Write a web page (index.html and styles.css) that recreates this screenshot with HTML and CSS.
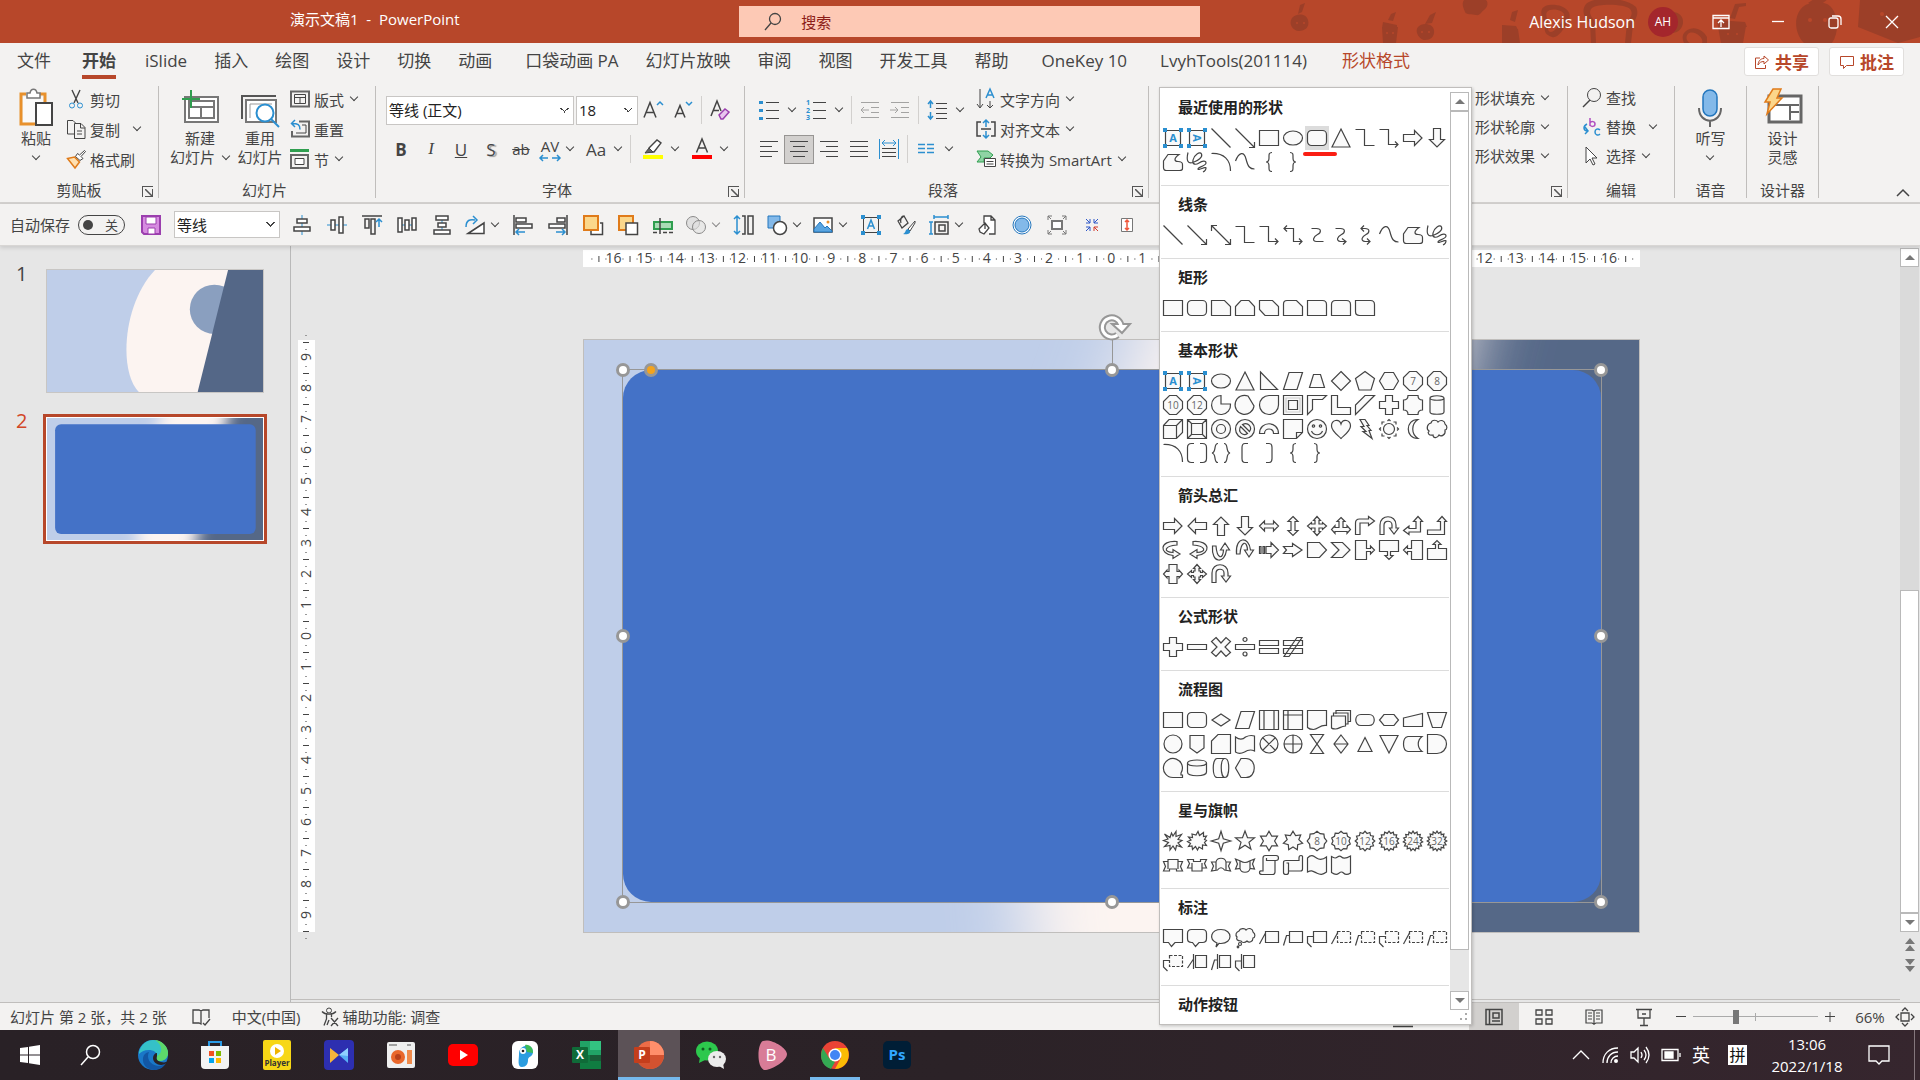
FILE: index.html
```html
<!DOCTYPE html>
<html lang="zh-CN">
<head>
    <meta charset="UTF-8">
    <meta name="viewport" content="width=device-width, initial-scale=1.0">
    <title>演示文稿1 - PowerPoint</title>
    <link rel="stylesheet" href="styles.css">
</head>
<body>
    <div class="app">
        <header class="titlebar">
            <svg class="doodles" viewBox="0 0 640 43" width="640" height="43" aria-hidden="true">
                <g fill="#9c3f28">
                    <path d="M12 18c4-5 14-5 16 2s-3 11-9 11-11-7-7-13zM18 14l2-9 5-2-3 9z"/>
                    <path d="M102 27h16l-2 16h-13zM103 22l14 3v3h-15zM108 20l3-6 5-2-3 9z"/>
                    <path d="M138 27c4-5 15-4 16 3s-4 10-9 10-11-8-7-13zM145 24l5-9 6-3-4 11z"/>
                    <path d="M184 0h22c3 3 1 8-2 10s-4 6-8 5-10 0-11-3-4-8-1-12z"/>
                    <path d="M222 31l16-2 2 14h-18zM222 25l14 1 2 4-16 1zM230 20l2-8 6-2-3 12z"/>
                    <path d="M262 9c3-6 20-6 26 2 4 5 0 11-2 14s-8 14-14 12-8-5-7-10-6-12-3-18zM267 12c3-4 14-3 17 2 2 5-9 18-13 18s-3-6-3-9-3-8-1-11z" fill-rule="evenodd"/>
                    <path d="M306 4c8-8 40-7 50 3 4 8-2 13-3 18l-2 18h-40l-1-20c-6-4-9-13-4-19zM312 8c-5 5 1 10 3 14l1 21h29l2-20c3-5 7-9 3-14s-32-6-38-1z" fill-rule="evenodd"/>
                    <path d="M386 14c8-5 18 0 17 9s-12 14-19 6z"/>
                    <path d="M406 31c8-6 17-1 21 6v6h-23c-2-5-2-9 2-12zM408 34c-3 3-1 8 2 9h12c3-5-9-14-14-9z" fill-rule="evenodd"/>
                    <path d="M438 27l28-1-3 17h-22zM437 20l28 2 2 5h-29zM450 18l5-14 11-1v3l-7 1-4 12z"/>
                    <path d="M524 6c5-4 20-6 26 0 8 8 10 25 2 37h-28c-11-11-10-30 0-37zM528 3l6-4h14l-9 7z"/>
                    <path d="M580 0h60v37l-22 6-40-16zM590 4l40 6-14 24-26-8z"/>
                </g>
                <g fill="#b7472a">
                    <circle cx="17" cy="23" r="1"/><circle cx="24" cy="23" r="1"/>
                    <circle cx="107" cy="33" r="1"/><circle cx="113" cy="33" r="1"/>
                    <circle cx="142" cy="32" r="1"/><circle cx="149" cy="32" r="1"/>
                    <circle cx="448" cy="34" r="1"/><circle cx="457" cy="34" r="1"/>
                    <circle cx="530" cy="20" r="2"/><circle cx="545" cy="20" r="2"/>
                    <circle cx="602" cy="14" r="2"/><circle cx="616" cy="18" r="2"/>
                </g>
            </svg>
            <div class="doc-title">演示文稿1&nbsp; -&nbsp; PowerPoint</div>
            <label class="search-box">
                <svg width="20" height="20" viewBox="0 0 20 20" fill="none" stroke="#8c1d18" stroke-width="1.3"><circle cx="12" cy="7" r="5.5"/><path d="M8 11 2 18"/></svg>
                <input type="text" placeholder="搜索" aria-label="搜索">
            </label>
            <div class="title-right">
                <span class="user-name">Alexis Hudson</span>
                <span class="avatar">AH</span>
                <button class="win-btn" aria-label="功能区显示选项"><svg viewBox="0 0 18 16" width="18" height="16"><path d="M1 1.500h16v13H1zM1 4h16M9 13V6.500M6 9l3-3 3 3" /></svg></button>
                <button class="win-btn" aria-label="最小化"><svg viewBox="0 0 14 14" width="14" height="14"><path d="M1 6.500h12"/></svg></button>
                <button class="win-btn" aria-label="还原"><svg viewBox="0 0 14 14" width="14" height="14"><rect x="1" y="3" width="9" height="10" rx="2"/><path d="M4 1h6a3 3 0 0 1 3 3v6"/></svg></button>
                <button class="win-btn" aria-label="关闭"><svg viewBox="0 0 14 14" width="14" height="14"><path d="M1 1l12 12M13 1 1 13"/></svg></button>
            </div>
        </header>

        <nav class="tabs">
            <a href="#" class="tab">文件</a>
            <a href="#" class="tab active">开始</a>
            <a href="#" class="tab">iSlide</a>
            <a href="#" class="tab">插入</a>
            <a href="#" class="tab">绘图</a>
            <a href="#" class="tab">设计</a>
            <a href="#" class="tab">切换</a>
            <a href="#" class="tab">动画</a>
            <a href="#" class="tab addin">口袋动画 PA</a>
            <a href="#" class="tab">幻灯片放映</a>
            <a href="#" class="tab">审阅</a>
            <a href="#" class="tab">视图</a>
            <a href="#" class="tab">开发工具</a>
            <a href="#" class="tab">帮助</a>
            <a href="#" class="tab addin">OneKey 10</a>
            <a href="#" class="tab addin">LvyhTools(201114)</a>
            <a href="#" class="tab addin context">形状格式</a>
            <span class="spacer"></span>
            <button class="share-btn"><svg width="16" height="16" viewBox="0 0 16 16"><path d="M6 4H1.500v10.500h10V11M10 2l4.500 4L10 10V7.500c-3 0-4.500 1-6 3.500.300-4 2.500-6.500 6-6.500z"/></svg>共享</button>
            <button class="share-btn"><svg width="16" height="16" viewBox="0 0 16 16"><path d="M1.500 2.500h13v9h-7l-3 3v-3h-3z"/></svg>批注</button>
        </nav>

        <div class="ribbon">
            <section class="group g-clip">
                <div class="group-body">
                    <button class="big-btn">
                        <svg width="36" height="40" viewBox="0 0 36 40"><path d="M8 6H3v30h14M22 6h5v8" stroke="#e8912d" stroke-width="3"/><path d="M5 9h20v6h-7v19H5z" fill="#fafafa" stroke="none"/><path d="M9 10V5h3c1-5 6-5 7 0h3v5z" fill="#fff" stroke="#777" stroke-width="1.500"/><rect x="18" y="15" width="16" height="22" fill="#fff" stroke-width="2"/></svg>
                        <span>粘贴</span><i class="chev"></i>
                    </button>
                    <div class="btn-col">
                        <button class="row-btn"><svg class="ico" viewBox="0 0 20 20"><path d="M6 1l6 13M14 1 8 14" stroke-width="1.400"/><g class="blue"><circle cx="6" cy="16.500" r="2.500"/><circle cx="14" cy="16.500" r="2.500"/></g></svg>剪切</button>
                        <button class="row-btn"><svg class="ico" viewBox="0 0 20 20"><path d="M8 15H1.500V1.500H7l3 3M8.500 4.500H15l4 4v11H8.500zM14.500 5v4H19M11 12h5M11 15h5"/></svg>复制<i class="chev far"></i></button>
                        <button class="row-btn"><svg class="ico" viewBox="0 0 20 20"><path d="M18.500 1.500l-5 4.500-2-1.500-2 3 4.500 4 3-2-2-2 4.500-5z" fill="#fff"/><path d="M8.500 8l5 5L9 19 1.500 9.500z" fill="#ffe0b0" stroke="#e07b1a" stroke-width="1.500"/></svg>格式刷</button>
                    </div>
                </div>
                <div class="group-label">剪贴板</div><button class="launcher" aria-label="剪贴板设置"></button>
            </section>

            <section class="group g-slides">
                <div class="group-body">
                    <button class="big-btn">
                        <svg width="40" height="40" viewBox="0 0 40 40"><rect x="5" y="9" width="33" height="25" fill="#fff" stroke="#777" stroke-width="2"/><path d="M9 13h25v17H9zM9 19h25M21 19v11" stroke="#777" stroke-width="2"/><path d="M2 11h18M11 2v18" stroke="#2f9e4f" stroke-width="2"/></svg>
                        <span>新建</span><span>幻灯片 <i class="chev"></i></span>
                    </button>
                    <button class="big-btn">
                        <svg width="40" height="40" viewBox="0 0 40 40"><path d="M2 31V8h34" stroke-width="2" stroke="#555"/><path d="M6 34V12h30v22z" fill="#fff" stroke="#777" stroke-width="2"/><path d="M10 30V16h22" stroke="#999"/><circle cx="25" cy="25" r="8.500" fill="#fff" stroke="#2b8fd0" stroke-width="2"/><path d="M31 31l8 8" stroke="#2b8fd0" stroke-width="2"/></svg>
                        <span>重用</span><span>幻灯片</span>
                    </button>
                    <div class="btn-col">
                        <button class="row-btn"><svg class="ico" viewBox="0 0 20 20"><path d="M1 2.500h18v15H1z" stroke-width="2" stroke="#666"/><path d="M4.500 5.500h11v9h-11zM4.500 8.500h11M10 8.500v6"/></svg>版式<i class="chev"></i></button>
                        <button class="row-btn"><svg class="ico" viewBox="0 0 20 20"><path d="M9 2.500h10v15H2V12" stroke-width="2" stroke="#666"/><path d="M12 6h4v8H6"/><path class="blue" d="M5 1 1.500 4.500 5 8M2 4.500c6 0 8 1 8 6" stroke-width="1.500"/></svg>重置</button>
                        <button class="row-btn"><svg class="ico" viewBox="0 0 20 20"><path d="M0 1.500h19" stroke="#2f9e4f" stroke-width="3"/><path d="M1 6h17v13H1z" stroke-width="2" stroke="#666"/><path d="M5 9.500h9v6H5z" fill="#fff"/></svg>节<i class="chev"></i></button>
                    </div>
                </div>
                <div class="group-label">幻灯片</div>
            </section>

            <section class="group g-font">
                <div class="group-body rows">
                    <div class="tool-row">
                        <select class="combo font-name" aria-label="字体"><option>等线 (正文)</option></select>
                        <select class="combo font-size" aria-label="字号"><option>18</option></select>
                        <button class="tool" aria-label="增大字号"><svg class="ico" viewBox="0 0 20 20"><path d="M1 17.500 7 2.500l6 15M3 12.500h8" stroke-width="1.500"/><path class="blue" d="M14 5l3-3 3 3" stroke-width="1.500"/></svg></button>
                        <button class="tool" aria-label="减小字号"><svg class="ico" viewBox="0 0 20 20"><path d="M2 17.500 7 5.500l5 12M4 13.500h6" stroke-width="1.500"/><path class="blue" d="M13 2l3 3 3-3" stroke-width="1.500"/></svg></button>
                        <i class="sep"></i>
                        <button class="tool" aria-label="清除格式"><svg class="ico" viewBox="0 0 20 20"><path d="M1 16 7 1l4 10M3.500 10.500H9" stroke-width="1.500"/><path d="M9 15l6-6 4 3-6 7h-2z" fill="#e8c6ee" stroke="#9b3fae" stroke-width="1.500"/></svg></button>
                    </div>
                    <div class="tool-row styles">
                        <button class="tool glyph bold">B</button>
                        <button class="tool glyph italic">I</button>
                        <button class="tool glyph under">U</button>
                        <button class="tool glyph shadow">S</button>
                        <button class="tool glyph strike">ab</button>
                        <button class="tool glyph spacing">AV<svg width="22" height="6" viewBox="0 0 22 6"><path class="blue" d="M1 3h8M13 3h8M4 0 1 3l3 3M18 0l3 3-3 3" stroke-width="1.500"/></svg></button><i class="chev"></i>
                        <button class="tool glyph case">Aa</button><i class="chev"></i>
                        <i class="sep"></i>
                        <button class="tool" aria-label="突出显示"><svg class="ico" viewBox="0 0 20 20"><path d="M6 9l8-8 4 3-7 9H6z" fill="#fff" stroke-width="1.400"/><path d="M2 14l4-5 4 4z" fill="#666"/><path d="M0 18h20" stroke="#ff0" stroke-width="4"/></svg></button><i class="chev"></i>
                        <button class="tool" aria-label="字体颜色"><svg class="ico" viewBox="0 0 20 20"><path d="M4.500 13.500 10 0l5.500 13.500M6.500 9h7" stroke-width="1.500"/><path d="M0 18h20" stroke="#f00" stroke-width="4"/></svg></button><i class="chev"></i>
                    </div>
                </div>
                <div class="group-label">字体</div><button class="launcher" aria-label="字体设置"></button>
            </section>

            <section class="group g-para">
                <div class="group-body">
                    <div class="para-tools">
                        <div class="tool-row">
                            <button class="tool" aria-label="项目符号"><svg class="ico" viewBox="0 0 20 20"><path d="M7 2.500h13M7 10.500h13M7 18.500h13"/><path class="blue" d="M0 2.500h4M0 10.500h4M0 18.500h4" stroke-width="3"/></svg></button><i class="chev"></i>
                            <button class="tool" aria-label="编号"><svg class="ico" viewBox="0 0 20 20"><path d="M7 2.500h13M7 10.500h13M7 18.500h13"/><g class="num"><text x="0" y="5">1</text><text x="0" y="13">2</text><text x="0" y="20">3</text></g></svg></button><i class="chev"></i>
                            <i class="sep"></i>
                            <button class="tool dim" aria-label="减少缩进"><svg class="ico" viewBox="0 0 20 20"><path d="M1 2.500h18M11 7.500h8M11 12.500h8M1 17.500h18M9 10H1M4 7l-3 3 3 3"/></svg></button>
                            <button class="tool dim" aria-label="增加缩进"><svg class="ico" viewBox="0 0 20 20"><path d="M1 2.500h18M11 7.500h8M11 12.500h8M1 17.500h18M0 10h8M5 7l3 3-3 3"/></svg></button>
                            <i class="sep"></i>
                            <button class="tool" aria-label="行距"><svg class="ico" viewBox="0 0 20 20"><path d="M9 3.500h11M9 8.500h11M9 13.500h11M9 18.500h11"/><path class="blue" d="M3.500 1v7M1 4l2.500-3L6 4M3.500 12v7M1 16l2.500 3L6 16" stroke-width="1.500"/></svg></button><i class="chev"></i>
                        </div>
                        <div class="tool-row aligns">
                            <button class="tool" aria-label="左对齐"><svg class="ico" viewBox="0 0 20 20"><path d="M1 2.500h18M1 7.500h12M1 12.500h18M1 17.500h12"/></svg></button>
                            <button class="tool pressed" aria-label="居中"><svg class="ico" viewBox="0 0 20 20"><path d="M1 2.500h18M4 7.500h12M1 12.500h18M4 17.500h12"/></svg></button>
                            <button class="tool" aria-label="右对齐"><svg class="ico" viewBox="0 0 20 20"><path d="M1 2.500h18M7 7.500h12M1 12.500h18M7 17.500h12"/></svg></button>
                            <button class="tool" aria-label="两端对齐"><svg class="ico" viewBox="0 0 20 20"><path d="M1 2.500h18M1 7.500h18M1 12.500h18M1 17.500h18"/></svg></button>
                            <button class="tool" aria-label="分散对齐"><svg class="ico" viewBox="0 0 20 20"><path d="M3 9.500h14M3 13.500h14M3 17.500h14"/><path class="blue" d="M.500 0v20M19.500 0v20M3 4h14M6 1 3 4l3 3M14 1l3 3-3 3"/></svg></button>
                            <i class="sep"></i>
                            <button class="tool" aria-label="分栏"><svg class="ico" viewBox="0 0 20 20"><path class="blue" d="M2 5.500h7M11 5.500h7M2 9.500h7M11 9.500h7M2 13.500h7M11 13.500h7" stroke-width="1.500"/></svg></button><i class="chev"></i>
                        </div>
                    </div>
                    <div class="btn-col">
                        <button class="row-btn"><svg class="ico" viewBox="0 0 20 20"><path d="M4 0v18M1 15l3 4 3-4M14 12v7M11 16l3 3 3-3"/><path class="blue" d="M10 9l4-9 4 9M11.500 6h5" stroke-width="1.500"/></svg>文字方向<i class="chev"></i></button>
                        <button class="row-btn"><svg class="ico" viewBox="0 0 20 20"><path d="M5 3H1v14h4M15 3h4v14h-4M5 10h10" stroke-width="1.500"/><path class="blue" d="M10 1v7M7 4l3-3 3 3M10 12v7M7 16l3 3 3-3" stroke-width="1.500"/></svg>对齐文本<i class="chev"></i></button>
                        <button class="row-btn"><svg class="ico" viewBox="0 0 20 20"><path d="M1 2h11l5 4-3 3H8v4H1l4-5z" fill="#8fd3a4" stroke="#2f9e4f"/><path d="M8.500 9.500h11v8h-11zM10.500 12.500h7M10.500 15h7" fill="#fff"/></svg>转换为 SmartArt<i class="chev"></i></button>
                    </div>
                </div>
                <div class="group-label">段落</div><button class="launcher" aria-label="段落设置"></button>
            </section>

            <section class="group g-draw">
                <div class="group-body">
                    <div class="btn-col tight">
                        <button class="row-btn">形状填充<i class="chev"></i></button>
                        <button class="row-btn">形状轮廓<i class="chev"></i></button>
                        <button class="row-btn">形状效果<i class="chev"></i></button>
                    </div>
                </div>
                <button class="launcher" aria-label="形状设置"></button>
            </section>

            <section class="group g-edit">
                <div class="group-body">
                    <div class="btn-col tight">
                        <button class="row-btn"><svg class="ico" viewBox="0 0 20 20"><circle cx="12" cy="7" r="6.500"/><path d="M8 12l-7 7" stroke-width="1.500"/></svg>查找</button>
                        <button class="row-btn"><svg class="ico" viewBox="0 0 20 20"><path d="M8 1v8M8 6c1-2 5-2 5 1s-4 3-5 1" stroke="#b04fc0" stroke-width="1.500"/><path class="blue" d="M5 7c-4 2-4 6 0 7M3 17l3-3-3-4M18 13c-2-2-5-1-5 2s3 4 5 2" stroke-width="1.500"/></svg>替换<i class="chev far"></i></button>
                        <button class="row-btn"><svg class="ico" viewBox="0 0 20 20"><path d="M4 1v16l4-4 3 6 2-1-3-6h5z" fill="#fff"/></svg>选择<i class="chev"></i></button>
                    </div>
                </div>
                <div class="group-label">编辑</div>
            </section>

            <section class="group g-voice">
                <div class="group-body">
                    <button class="big-btn">
                        <svg width="26" height="40" viewBox="0 0 26 40"><rect x="6" y="2" width="14" height="26" rx="7" fill="#83b9e9" stroke="#2376bd" stroke-width="1.500"/><path d="M2 20c0 17 22 17 22 0M13 33v6" stroke-width="2" stroke="#666"/></svg>
                        <span>听写</span><i class="chev"></i>
                    </button>
                </div>
                <div class="group-label">语音</div>
            </section>

            <section class="group g-design">
                <div class="group-body">
                    <button class="big-btn">
                        <svg width="40" height="40" viewBox="0 0 40 40"><rect x="6" y="8" width="32" height="26" fill="#fff" stroke="#666" stroke-width="3"/><path d="M9 17h27M27 17v15M27 24h9" stroke="#666" stroke-width="2"/><path d="M10 1h8l-4 9h5L4 26l3-12H2z" fill="#fcd68a" stroke="#e07b1a" stroke-width="1.500"/></svg>
                        <span>设计</span><span>灵感</span>
                    </button>
                </div>
                <div class="group-label">设计器</div>
            </section>
            <span class="spacer"></span>
            <button class="collapse" aria-label="折叠功能区"><svg width="14" height="8" viewBox="0 0 14 8"><path d="M1 7l6-6 6 6" stroke-width="1.500"/></svg></button>
        </div>

        <div class="quickbar">
            <label class="autosave">自动保存 <input type="checkbox" aria-label="自动保存"><span class="toggle"><i></i>关</span></label>
            <button class="qbtn save" aria-label="保存"><svg class="ico" viewBox="0 0 20 20"><path d="M1 1h18v18H3l-2-2z" fill="#d68be0" stroke="#9b3fae" stroke-width="2"/><path d="M5 2h10v7H5zM7 13h7v6H7z" fill="#fff" stroke="#9b3fae"/></svg></button>
            <select class="combo quick-font" aria-label="快速字体"><option>等线</option></select>
            <div class="quick-icons">
                <button class="qbtn"><svg class="ico" viewBox="0 0 20 20"><path class="blue" d="M10 0v20"/><path d="M5 4h10v4H5zM2 12h16v4H2z" fill="#fff" stroke-width="1.500"/></svg></button>
                <button class="qbtn"><svg class="ico" viewBox="0 0 20 20"><path class="blue" d="M0 10h20"/><path d="M4 5h4v10H4zM12 2h4v16h-4z" fill="#fff" stroke-width="1.500"/></svg></button>
                <button class="qbtn"><svg class="ico" viewBox="0 0 20 20"><path d="M0 1h20M3 4h4v9H3zM9 4h4v15H9z" stroke-width="1.500"/><path class="blue" d="M17 12V4M14 7l3-3 3 3" stroke-width="1.500"/></svg></button>
                <button class="qbtn"><svg class="ico" viewBox="0 0 20 20"><path class="blue" d="M5 10h11"/><path d="M1 3h4v14H1zM8 5h4v10H8zM15 3h4v12h-4z" fill="#fff" stroke-width="1.500"/></svg></button>
                <button class="qbtn"><svg class="ico" viewBox="0 0 20 20"><path class="blue" d="M10 5v10"/><path d="M4 1h12v4H4zM6 8h8v4H6zM2 15h16v4H2z" fill="#fff" stroke-width="1.500"/></svg></button>
                <button class="qbtn"><svg class="ico" viewBox="0 0 20 20"><path class="blue" d="M1 12C1 5 5 4 10 5M8 1l4 4-4 4" stroke-width="1.500"/><path d="M3 18.500 19 8v10.500z" fill="#fff" stroke-width="1.500"/></svg><i class="chev"></i></button>
                <button class="qbtn"><svg class="ico" viewBox="0 0 20 20"><path d="M1 0v20M3 3h10v4H3zM3 9h16v4H3z" fill="#fff" stroke-width="1.500"/><path class="blue" d="M3 17h9M6 14l-3 3 3 3" stroke-width="1.500"/></svg></button>
                <button class="qbtn"><svg class="ico" viewBox="0 0 20 20"><path d="M19 0v20M17 3H9v4h8zM17 9H1v4h16z" fill="#fff" stroke-width="1.500"/><path class="blue" d="M17 17H8M14 14l3 3-3 3" stroke-width="1.500"/></svg></button>
                <button class="qbtn"><svg class="ico" viewBox="0 0 20 20"><path d="M17 8h2.500v11.500H8V16" fill="#fff" stroke-width="1.500"/><path d="M1 1h14v14H1z" fill="#fbd78b" stroke="#e07b1a" stroke-width="2"/></svg></button>
                <button class="qbtn"><svg class="ico" viewBox="0 0 20 20"><path d="M1 1h14v14H1z" fill="#fbd78b" stroke="#e07b1a" stroke-width="2"/><path d="M8 8h11.500v11.500H8z" fill="#fff" stroke-width="1.500"/></svg></button>
                <button class="qbtn"><svg class="ico" viewBox="0 0 20 20"><path d="M1 7h18v7H1z" fill="#a9dcb5" stroke="#2f9e4f" stroke-width="2"/><path d="M7 3v16M0 17.500h4M10 17.500h4M16 17.500h4" stroke-width="1.500"/></svg></button>
                <button class="qbtn dim-2"><svg class="ico" viewBox="0 0 20 20"><circle cx="7" cy="8" r="6.500" fill="#d5d5d5"/><circle cx="13" cy="12" r="6.500" fill="#d5d5d5" fill-opacity=".6"/></svg><i class="chev"></i></button>
                <button class="qbtn"><svg class="ico" viewBox="0 0 20 20"><path d="M8 1h3v18H8M14 1h5v18h-5z" stroke-width="1.500"/><path class="blue" d="M3 1v18M0 4l3-3 3 3M0 16l3 3 3-3" stroke-width="1.500"/></svg></button>
                <button class="qbtn"><svg class="ico" viewBox="0 0 20 20"><path d="M1 1h12v12H1z" fill="#83b9e9" stroke="#2376bd"/><circle cx="13" cy="13" r="6.500" fill="#fff" stroke-width="1.500"/></svg><i class="chev"></i></button>
                <button class="qbtn"><svg class="ico" viewBox="0 0 20 20"><path d="M1 3h18v14H1z" fill="#fff" stroke-width="1.500"/><path d="M1 14l6-7 5 6 2-2 5 5v1H1z" fill="#5aa5e0" stroke="#2376bd"/><circle cx="15" cy="7" r="1.500" fill="#e8912d" stroke="none"/></svg><i class="chev"></i></button>
                <button class="qbtn"><svg class="ico" viewBox="0 0 20 20"><path d="M2.500 2.500h15v15h-15z"/><path d="M0 0h4v4H0zM16 0h4v4h-4zM0 16h4v4H0zM16 16h4v4h-4z" fill="#2b8fd0" stroke="none"/><path class="blue" d="M6.500 14 10 5l3.500 9M8 11h4" stroke-width="1.500"/></svg></button>
                <button class="qbtn"><svg class="ico" viewBox="0 0 20 20"><path d="M2 6l6-5 4 7-6 5zM8 1c-3 0-4 5-3 7" stroke-width="1.300"/><path d="M19 6l-7 8 2 2 5-8z" fill="#fff"/><path d="M12 14c-3 0-2 4-5 5 5 1 8-1 7-3z" fill="#2b8fd0" stroke="none"/></svg></button>
                <button class="qbtn"><svg class="ico" viewBox="0 0 20 20"><path class="blue" d="M5 2h14M5 0v4M19 0v4M2 7v12M0 7h4M0 19h4" stroke-width="1.500"/><path d="M6 7h13v12H6zM10 10h6v6h-6z" stroke-width="1.500"/></svg><i class="chev"></i></button>
                <button class="qbtn"><svg class="ico" viewBox="0 0 20 20"><path d="M7 8V1h7l4 4v14h-6M14 1v4h4M2 14l6-6 4 5-5 6-4-2zM8 8v6" fill="#fff" stroke-width="1.300"/></svg></button>
                <button class="qbtn"><svg class="ico" viewBox="0 0 20 20"><circle cx="10" cy="10" r="9" fill="#fff" stroke="#2376bd"/><circle cx="10" cy="10" r="7" fill="#83b9e9" stroke="#2376bd"/></svg></button>
                <button class="qbtn"><svg class="ico" viewBox="0 0 20 20"><path d="M5 6h10v8H5z" fill="#fff" stroke-width="2" stroke="#777"/><path d="M1 5V1h4M1 1l3 3M15 1h4v4M19 1l-3 3M1 15v4h4M1 19l3-3M15 19h4v-4M19 19l-3-3" stroke="#777"/></svg></button>
                <button class="qbtn"><svg class="ico" viewBox="0 0 20 20"><path d="M4 8h4V4M8 8 4 4M12 4v4h4M12 8l4-4M4 12h4v4M8 12l-4 4" stroke="#2d56c8"/><path d="M16 12h-4v4M12 12l4 4" stroke="#d43a2b"/></svg></button>
                <button class="qbtn"><svg class="ico" viewBox="0 0 20 20"><path d="M4.500 3.500h11v13h-11z" fill="#fff" stroke="#777"/><path d="M10 5v10M8 7l2-2 2 2M8 13l2 2 2-2" stroke="#f0583c" stroke-width="1.500"/></svg></button>
            </div>
        </div>

        <main class="workspace">
            <aside class="thumbs">
                <div class="thumb-row">
                    <span class="thumb-no">1</span>
                    <button class="thumb" aria-label="幻灯片 1">
                        <svg viewBox="0 0 1600 900" preserveAspectRatio="none">
                            <rect width="1600" height="900" fill="#bfcee9"/>
                            <path d="M800 0C560 250 530 750 680 900H1600V0z" fill="#fcf4f1"/>
                            <circle cx="1240" cy="290" r="182" fill="#8a9fbf"/>
                            <path d="M1341 0H1600V900H1116z" fill="#546787"/>
                        </svg>
                    </button>
                </div>
                <div class="thumb-row current">
                    <span class="thumb-no">2</span>
                    <button class="thumb" aria-label="幻灯片 2">
                        <svg viewBox="0 0 1600 900" preserveAspectRatio="none">
                            <use href="#slide-bg"/>
                            <rect x="60" y="46" width="1486" height="810" rx="44" fill="#4472c7"/>
                        </svg>
                    </button>
                </div>
            </aside>

            <div class="editor">
                <div class="ruler-top" id="rulerTop"></div>
                <div class="ruler-side" id="rulerSide"></div>
                <div class="stage">
                    <div class="slide">
                        <svg class="slide-bg" viewBox="0 0 1600 900" preserveAspectRatio="none">
                            <defs>
                                <filter id="soft" x="-10%" y="-10%" width="120%" height="120%"><feGaussianBlur stdDeviation="56"/></filter>
                                <g id="slide-bg">
                                    <rect width="1600" height="900" fill="#bfcee9"/>
                                    <path d="M930-200C820 0 540 750 730 1100H1900V-200z" fill="#fcf4f1" filter="url(#soft)"/>
                                    <path d="M1390-200H1900V1100H1056z" fill="#546787" filter="url(#soft)"/>
                                </g>
                            </defs>
                            <use href="#slide-bg"/>
                        </svg>
                        <div class="selection">
                            <div class="rounded-shape"></div>
                            <i class="stem"></i>
                            <svg class="rotate" width="34" height="30" viewBox="0 0 34 30"><path d="M19.500 23A9.500 9.500 0 1 1 23 13" fill="none" stroke="#979797" stroke-width="7"/><path d="M14 12h18l-8 9z" fill="#fff" stroke="#979797" stroke-width="2"/><path d="M19.500 23A9.500 9.500 0 1 1 23 13v3" fill="none" stroke="#fff" stroke-width="3"/></svg>
                            <i class="handle nw"></i><i class="handle n"></i><i class="handle ne"></i>
                            <i class="handle w"></i><i class="handle e"></i>
                            <i class="handle sw"></i><i class="handle s"></i><i class="handle se"></i>
                            <i class="handle adjust"></i>
                        </div>
                    </div>
                </div>
            </div>

            <div class="vscroll">
                <button class="sc-btn up" aria-label="向上"></button>
                <div class="sc-track"></div>
                <div class="sc-thumb"></div>
                <button class="sc-btn down" aria-label="向下"></button>
                <button class="page-btn" aria-label="上一张"><svg width="12" height="14" viewBox="0 0 12 14"><path d="M6 0l5 6H1zM6 7l5 6H1z"/></svg></button>
                <button class="page-btn" aria-label="下一张"><svg width="12" height="14" viewBox="0 0 12 14"><path d="M1 1h10L6 7zM1 8h10l-5 6z"/></svg></button>
            </div>
        </main>

        <footer class="statusbar">
            <span class="st-text">幻灯片 第 2 张，共 2 张</span>
            <svg class="ico st-book" viewBox="0 0 20 20"><path d="M10 3v14l-2-1H2V3h6l2 1 2-1h6v8M12 16l2 2 5-6" stroke-width="1.300"/></svg>
            <span class="st-text">中文(中国)</span>
            <span class="st-text access"><svg class="ico" viewBox="0 0 20 20"><circle cx="9" cy="3.500" r="2.500"/><path d="M2 4.500C5 8 13 8 16 4.500M6.500 7v5L4 18.500M11.500 7v3M9 13l-2 5M11 11l7 8M18 11l-7 8" stroke-width="1.300"/></svg>辅助功能: 调查</span>
            <span class="spacer"></span>
            <button class="view-btn note" aria-label="备注"><svg class="ico" viewBox="0 0 20 20"><path d="M0 19.500h20M3 15h14M10 4l5 7H5z" stroke-width="1.500"/></svg></button>
            <button class="view-btn on" aria-label="普通"><svg class="ico" viewBox="0 0 20 20"><path d="M2 2.500h16v15H2zM5.500 3v14M9 6h6v5H9zM8 14h8" stroke-width="1.500"/></svg></button>
            <button class="view-btn" aria-label="浏览"><svg class="ico" viewBox="0 0 20 20"><path d="M2 3h6v5H2zM12 3h6v5h-6zM2 12h6v5H2zM12 12h6v5h-6z" stroke-width="1.300"/></svg></button>
            <button class="view-btn" aria-label="阅读"><svg class="ico" viewBox="0 0 20 20"><path d="M10 4v14M2 3h6l2 1 2-1h6v13h-6l-2 1-2-1H2zM4 6h4M4 9h4M4 12h4M12 6h4M12 9h4M12 12h4" stroke-width="1.200"/></svg></button>
            <button class="view-btn" aria-label="放映"><svg class="ico" viewBox="0 0 20 20"><path d="M2 2.500h16M4 3v8h12V3M10 11v7M6 18.500h8M8 7h4" stroke-width="1.300"/></svg></button>
            <button class="zoom-btn" aria-label="缩小"><svg width="12" height="12" viewBox="0 0 12 12"><path d="M1 5.500h10"/></svg></button>
            <input class="zoom-range" type="range" min="0" max="100" value="34" aria-label="缩放">
            <button class="zoom-btn" aria-label="放大"><svg width="12" height="12" viewBox="0 0 12 12"><path d="M1 5.500h10M6 1v10"/></svg></button>
            <span class="zoom-pct">66%</span>
            <button class="fit-btn" aria-label="适应窗口"><svg class="ico" viewBox="0 0 20 20"><path d="M6 6h8v8H6zM7 4l3-3 3 3M7 16l3 3 3-3M4 7l-3 3 3 3M16 7l3 3-3 3" stroke-width="1.300"/></svg></button>
        </footer>

        <div class="taskbar">
            <button class="task start" aria-label="开始菜单"><svg width="20" height="20" viewBox="0 0 20 20"><path d="M0 3l8-1v7.500H0zM9 1.800 20 0v9.500H9zM0 10.500h8V18l-8-1zM9 10.500h11V20L9 18.200z" fill="#fff"/></svg></button>
            <button class="task" aria-label="搜索"><svg width="22" height="22" viewBox="0 0 22 22"><g stroke="#fff" stroke-width="1.500"><circle cx="13" cy="8" r="6.500"/><path d="M8 13l-7 8"/></g></svg></button>
            <button class="task" aria-label="Edge"><svg width="30" height="30" viewBox="0 0 30 30"><circle cx="15" cy="15" r="15" fill="#1a78c8"/><path d="M1 12C3 4 9 0 15 0c9 0 15 7 15 13 0 5-4 8-8 8-5 0-3-3-3-5 0-4-4-6-8-6-5 0-8 2-10 4z" fill="#35c1c8"/><path d="M17 0c8 1 13 7 13 13 0 5-4 8-8 8-5 0-3-3-3-5 6-3 6-11-2-16z" fill="#5dd86a"/><path d="M11 12c-3 6 1 13 9 14 3 0 6-1 8-3-4 8-14 9-20 4-5-5-4-14 3-15z" fill="#1257a4"/><path d="M19 13c-2 0-4 2-4 5 0 4 4 7 8 7 2 0 5-1 6-3 0 0-3 1-6 0-4-1-5-3-4-6z" fill="#292126"/></svg></button>
            <button class="task" aria-label="应用商店"><svg width="30" height="30" viewBox="0 0 30 30"><path d="M9 7V2h12v5" fill="none" stroke="#2b9be6" stroke-width="2"/><path d="M1 6h28v19q0 4-4 4H5q-4 0-4-4z" fill="#f3f3f3"/><path d="M9 11h5v5H9z" fill="#f25022"/><path d="M16 11h5v5h-5z" fill="#7fba00"/><path d="M9 18h5v5H9z" fill="#00a4ef"/><path d="M16 18h5v5h-5z" fill="#ffb900"/></svg></button>
            <button class="task" aria-label="Player"><svg width="30" height="30" viewBox="0 0 30 30"><rect x="1" width="28" height="30" rx="2" fill="#f7d716"/><circle cx="15" cy="11" r="7" fill="#fff"/><path d="M13 7l6 4-6 4z" fill="#f0b400"/><text x="15" y="26" class="player">Player</text></svg></button>
            <button class="task" aria-label="媒体"><svg width="30" height="30" viewBox="0 0 30 30"><rect width="30" height="30" rx="4" fill="#2d2fb0"/><path d="M6 8l9 7-9 8z" fill="#f6b53c"/><path d="M24 8l-9 7 9 8z" fill="#58aef5"/><path d="M15 15l9-7v8z" fill="#8fd0ff"/></svg></button>
            <button class="task" aria-label="录屏"><svg width="28" height="26" viewBox="0 0 28 26"><rect width="28" height="26" rx="2" fill="#efefef"/><path d="M2 3h8M20 3h4" stroke="#888" stroke-width="1.500"/><circle cx="11" cy="15" r="7" fill="#e9672b"/><circle cx="11" cy="15" r="3" fill="#b8401a"/><path d="M20 8h5v14h-5z" fill="#f08a4b"/></svg></button>
            <button class="task" aria-label="YouTube"><svg width="30" height="24" viewBox="0 0 30 24"><rect y="1" width="30" height="22" rx="5" fill="#f00"/><path d="M12 7l8 5-8 5z" fill="#fff"/></svg></button>
            <button class="task" aria-label="小鸟"><svg width="28" height="28" viewBox="0 0 28 28"><rect x="1" width="26" height="28" rx="6" fill="#fff"/><path d="M8 13c0-10 14-11 14-2 0 5-5 4-5 8s-2 7-6 7c-5 0-3-8-3-13z" fill="#2b9de0"/><path d="M14 4c5-1 8 3 8 8l-6-1z" fill="#3dbb57"/><circle cx="12" cy="10" r="3" fill="#fff"/><circle cx="12" cy="10" r="1.300" fill="#222"/></svg></button>
            <button class="task" aria-label="Excel"><svg width="30" height="28" viewBox="0 0 30 28"><path d="M8 0h21v28H8z" fill="#21a366"/><path d="M18 0h11v9H18z" fill="#33c481"/><path d="M8 14h21v14H8z" fill="#107c41"/><path d="M18 14h11v6H18z" fill="#185c37"/><rect y="6" width="16" height="16" rx="1" fill="#0f6b38"/><text x="8" y="18" class="logo-t">X</text></svg></button>
            <button class="task open focus" aria-label="PowerPoint"><svg width="30" height="28" viewBox="0 0 30 28"><circle cx="16" cy="14" r="14" fill="#ed6c47"/><path d="M16 0a14 14 0 0 1 14 14H16z" fill="#ff8f6b"/><path d="M2 14h28a14 14 0 0 1-28 0z" fill="#d35230"/><rect y="6" width="16" height="16" rx="1" fill="#c43e1c"/><text x="8" y="18" class="logo-t">P</text></svg></button>
            <button class="task" aria-label="微信"><svg width="32" height="28" viewBox="0 0 32 28"><ellipse cx="12" cy="10" rx="11" ry="9.500" fill="#2dc84d"/><path d="M5 16l-1 6 6-3z" fill="#2dc84d"/><circle cx="8" cy="8" r="1.500" fill="#115c22"/><circle cx="15" cy="8" r="1.500" fill="#115c22"/><ellipse cx="22" cy="18" rx="9" ry="8" fill="#ececec"/><path d="M24 25l5 3-1-6z" fill="#ececec"/><circle cx="19" cy="16" r="1.200" fill="#666"/><circle cx="25" cy="16" r="1.200" fill="#666"/></svg></button>
            <button class="task" aria-label="B"><svg width="30" height="30" viewBox="0 0 30 30"><path d="M5 1C13-2 29 8 29 14c0 7-14 15-21 16C-2 31-1 3 5 1z" fill="#d87c97"/><text x="13" y="21" class="b-t">B</text></svg></button>
            <button class="task open" aria-label="Chrome"><svg width="28" height="28" viewBox="0 0 28 28"><circle cx="14" cy="14" r="14" fill="#ea4335"/><path d="M2 7l6 10 6 4-4 7C0 25-2 14 2 7z" fill="#34a853"/><path d="M14 7h12c5 9-1 21-12 21l6-11z" fill="#fbbc05"/><circle cx="14" cy="14" r="6.500" fill="#fff"/><circle cx="14" cy="14" r="5" fill="#4285f4"/></svg></button>
            <button class="task" aria-label="Photoshop"><svg width="28" height="28" viewBox="0 0 28 28"><rect width="28" height="28" rx="5" fill="#001e36"/><text x="14" y="19" class="ps-t">Ps</text></svg></button>
            <span class="spacer"></span>
            <div class="tray">
                <svg width="18" height="18" viewBox="0 0 18 18"><path d="M1 13l8-8 8 8"/></svg>
                <svg width="18" height="18" viewBox="0 0 18 18"><path d="M2 17C2 8 8 2 17 2M6 17c0-6 4-11 11-11M10 17c0-4 3-7 7-7"/><circle cx="15" cy="15" r="2" fill="#fff" stroke="none"/></svg>
                <svg width="20" height="18" viewBox="0 0 20 18"><path d="M1 6h3l4-4v14l-4-4H1zM11 6q2 3 0 6M14 4q4 5 0 10M16 1q6 8 0 16"/></svg>
                <svg width="20" height="14" viewBox="0 0 20 14"><path d="M1 1.500h16v11H1zM19 5v4"/><path d="M4 4h8v6H4z" fill="#fff"/></svg>
                <span class="ime">英</span>
                <span class="ime-box">拼</span>
            </div>
            <div class="clock"><span>13:06</span><span>2022/1/18</span></div>
            <button class="notice" aria-label="通知"><svg width="22" height="20" viewBox="0 0 22 20"><path d="M1 1h20v15h-7l-3 3-3-3H1z"/></svg></button>
            <i class="desk"></i>
        </div>
    </div>

    <div class="gallery">
        <div class="gallery-list" id="galleryList"></div>
        <div class="gallery-scroll">
            <button class="sc-btn up" aria-label="向上滚动"></button>
            <div class="g-thumb"></div>
            <div class="g-rest"></div>
            <button class="sc-btn down" aria-label="向下滚动"></button>
            <svg class="grip" width="8" height="8" viewBox="0 0 8 8"><path d="M5 0h2v2H5zM5 5h2v2H5zM0 5h2v2H0z" fill="#aaa"/></svg>
        </div>
        <i class="red-mark"></i>
    </div>

    <script src="script.js"></script>
</body>
</html>
```

FILE: styles.css
```css
* {
    margin: 0;
    padding: 0;
    box-sizing: border-box;
}

body {
    font-family: "Open Sans", "Noto Sans CJK SC", sans-serif;
    font-size: 15px;
    color: #444;
    background: #e6e6e6;
    overflow: hidden;
}

button, input, select {
    font: inherit;
    color: inherit;
    border: none;
    background: none;
}

svg {
    fill: none;
    stroke: #444;
    flex-shrink: 0;
    display: block;
    overflow: visible;
}

svg text {
    stroke: none;
}

a {
    color: inherit;
    text-decoration: none;
}

.app {
    height: 100vh;
    display: flex;
    flex-direction: column;
}

.spacer {
    flex: 1;
}

.ico {
    width: 20px;
    height: 20px;
}

.blue {
    stroke: #2b8fd0;
}

.chev {
    display: inline-block;
    width: 6px;
    height: 6px;
    border-right: 1px solid #444;
    border-bottom: 1px solid #444;
    transform: rotate(45deg);
    margin: 0 1px 4px 7px;
    flex-shrink: 0;
}

/* title bar */
.titlebar {
    position: relative;
    height: 43px;
    display: grid;
    grid-template-columns: 38.5% 24% 1fr;
    align-items: center;
    background: #b7472a;
    color: #fff;
}

.doodles {
    position: absolute;
    right: 0;
    top: 0;
    stroke: none;
    overflow: hidden;
}

.doc-title {
    padding: 0 0 7px 290px;
}

.search-box {
    height: 31px;
    background: #fdc9b5;
    display: flex;
    align-items: center;
    gap: 18px;
    padding-left: 24px;
    color: #8c1d18;
}

.search-box input {
    flex: 1;
    outline: none;
}

.search-box input::placeholder {
    color: #8c1d18;
    opacity: 1;
}

.title-right {
    position: relative;
    display: flex;
    justify-content: flex-end;
    align-items: center;
}

.user-name {
    font-size: 16px;
    margin-right: 13px;
}

.avatar {
    width: 30px;
    height: 30px;
    border-radius: 50%;
    background: #a4262c;
    font-size: 12px;
    line-height: 30px;
    text-align: center;
    margin-right: 14px;
}

.win-btn {
    width: 57px;
    height: 43px;
    display: flex;
    align-items: center;
    justify-content: center;
}

.win-btn svg {
    stroke: #fff;
    stroke-width: 1.3;
}

/* tabs */
.tabs {
    height: 43px;
    background: #f3f2f1;
    display: flex;
    align-items: flex-start;
    gap: 27px;
    padding: 4px 16px 0 17px;
    font-size: 17px;
    white-space: nowrap;
}

.tab {
    line-height: 28px;
    height: 32px;
}

.tab.active {
    font-weight: 700;
    border-bottom: 4px solid #b7472a;
    margin: 0 2px 0 4px;
}

.tab.addin {
    margin-left: 6px;
}

.tab.context {
    color: #b7472a;
    margin-left: 8px;
}

.share-btn {
    height: 29px;
    width: 75px;
    background: #fff;
    border: 1px solid #e1dfdd;
    border-radius: 3px;
    color: #b7472a;
    font-weight: 700;
    display: flex;
    align-items: center;
    justify-content: center;
    gap: 5px;
}

.share-btn + .share-btn {
    margin-left: -17px;
}

.share-btn svg {
    stroke: #b7472a;
}

/* ribbon */
.ribbon {
    height: 118px;
    background: #f3f2f1;
    border-bottom: 2px solid #d2d0ce;
    display: flex;
    white-space: nowrap;
}

.group {
    position: relative;
    height: 112px;
    border-right: 1px solid #c0bebc;
    display: flex;
    flex-direction: column;
}

.g-clip { width: 159px; padding-left: 16px; }
.g-slides { width: 217px; padding-left: 11px; }
.g-font { width: 369px; padding-left: 10px; }
.g-para { width: 404px; padding-left: 9px; }
.g-draw { width: 419px; padding-left: 326px; }
.g-edit { width: 107px; padding-left: 14px; }
.g-voice { width: 72px; }
.g-design { width: 72px; }

.group-body {
    flex: 1;
    display: flex;
}

.group-body.rows {
    flex-direction: column;
}

.group-label {
    line-height: 16px;
    text-align: center;
    padding-right: 16px;
}

.g-voice .group-body,
.g-design .group-body {
    justify-content: center;
}

.g-edit .group-label,
.g-voice .group-label,
.g-design .group-label {
    padding-right: 0;
}

.g-edit .group-label {
    padding-right: 14px;
}

.launcher {
    position: absolute;
    right: 5px;
    bottom: 1px;
    width: 11px;
    height: 11px;
    border-left: 1px solid #555;
    border-top: 1px solid #555;
}

.launcher::after {
    content: "";
    position: absolute;
    right: 0;
    bottom: 0;
    width: 7px;
    height: 7px;
    border-right: 1px solid #555;
    border-bottom: 1px solid #555;
    background: linear-gradient(to top right, transparent 40%, #555 45%, #555 55%, transparent 60%);
}

.big-btn {
    display: flex;
    flex-direction: column;
    align-items: center;
    line-height: 19px;
}

.big-btn > svg {
    margin: 2px 0 1px;
}

.big-btn > .chev {
    margin: 5px 0 0;
}

.big-btn .chev {
    margin-left: 4px;
}

.g-clip .big-btn {
    width: 40px;
    margin-right: 10px;
}

.g-clip .big-btn > .chev,
.g-voice .big-btn > .chev {
    margin-left: 0;
}

.g-slides .big-btn {
    width: 60px;
}

.btn-col {
    display: flex;
    flex-direction: column;
    margin-top: -2px;
}

.row-btn {
    height: 30px;
    display: flex;
    align-items: center;
}

.row-btn .ico {
    margin-right: 4px;
}

.tight .row-btn {
    height: 29px;
    padding-bottom: 2px;
}

.chev.far {
    margin-left: 14px;
}

.combo {
    appearance: none;
    height: 29px;
    border: 1px solid #c8c6c4;
    background-color: #fff;
    color: #222;
    padding-left: 2px;
    background-image: linear-gradient(45deg, transparent 50%, #444 50%, #444 62%, transparent 62%), linear-gradient(-45deg, transparent 50%, #444 50%, #444 62%, transparent 62%);
    background-size: 5px 5px;
    background-position: right 8px center, right 4px center;
    background-repeat: no-repeat;
}

.font-name { width: 188px; }
.font-size { width: 62px; margin-left: 2px; }

.tool-row {
    display: flex;
    align-items: center;
    height: 30px;
    margin-top: 9px;
}

.tool {
    display: flex;
    align-items: center;
    justify-content: center;
    width: 30px;
    height: 29px;
}

.tool-row .chev {
    margin: 0 3px 4px 3px;
}

.sep {
    width: 1px;
    height: 28px;
    background: #d2d0ce;
    margin: 0 3px;
}

.glyph { font-size: 17px; }
.bold { font-weight: 700; }
.italic { font-style: italic; font-family: "Liberation Serif", serif; }
.under { text-decoration: underline; }
.shadow { text-shadow: 2px 1px 1px #999; }
.strike { text-decoration: line-through; font-size: 15px; }

.spacing {
    width: 28px;
    flex-direction: column;
    font-size: 15px;
    line-height: 18px;
}

.case {
    width: 32px;
    margin-left: 4px;
}

.g-font .styles .sep {
    margin: 0 6px;
}

.g-font .styles .tool:not(.glyph) {
    width: 32px;
}

.g-font .styles .tool:not(.glyph) + .chev {
    margin: 0 8px 4px 3px;
}

.num {
    fill: #2b8fd0;
    font-size: 7px;
    font-weight: 700;
}

.para-tools {
    width: 222px;
}

.para-tools .chev {
    margin: 0 6px 4px 5px;
}

.dim {
    opacity: 0.45;
}

.dim-2 {
    opacity: 0.6;
}

.pressed {
    background: #d2d0ce;
    border: 1px solid #979593;
}

.collapse {
    align-self: flex-end;
    padding: 0 10px 5px 0;
}

/* quick access bar */
.quickbar {
    height: 42px;
    background: #f3f2f1;
    border-bottom: 1px solid #d8d6d4;
    display: flex;
    align-items: center;
    padding-left: 10px;
    box-shadow: 0 2px 4px rgba(0, 0, 0, 0.12);
    z-index: 1;
}

.autosave {
    display: flex;
    align-items: center;
    gap: 8px;
    position: relative;
}

.autosave input {
    position: absolute;
    opacity: 0;
}

.toggle {
    width: 47px;
    height: 20px;
    border: 1px solid #444;
    border-radius: 10px;
    font-size: 13px;
    line-height: 18px;
    display: flex;
    align-items: center;
    justify-content: space-between;
    padding: 0 6px 0 4px;
}

.toggle i {
    width: 10px;
    height: 10px;
    border-radius: 50%;
    background: #444;
}

.save {
    margin: 0 13px 0 16px;
}

.quick-font {
    width: 106px;
    height: 27px;
    margin-right: 12px;
}

.quick-icons {
    display: flex;
    gap: 15px;
}

.qbtn {
    display: flex;
    align-items: center;
}

.quick-icons .qbtn:has(.chev) {
    margin-left: -2px;
    margin-right: -1px;
}

/* workspace */
.workspace {
    flex: 1;
    display: flex;
    min-height: 0;
    border-bottom: 1px solid #c0bebc;
}

.thumbs {
    width: 291px;
    border-right: 1px solid #b9b9b9;
    padding: 23px 23px 0 16px;
}

.thumb-row {
    display: flex;
    padding-bottom: 18px;
}

.thumb-no {
    width: 27px;
    font-size: 20px;
    line-height: 10px;
}

.thumb {
    flex: 1;
    padding: 0;
    margin: 0 3px 3px;
    border: 1px solid #c8c6c4;
}

.thumb svg {
    width: 100%;
    height: 122px;
    stroke: none;
    overflow: hidden;
}

.current .thumb-no {
    color: #d24726;
    padding-top: 2px;
}

.current .thumb {
    margin: 0;
    border: 3px solid #b7472a;
    padding: 1px;
    background: #fff;
}

.editor {
    flex: 1;
    display: grid;
    grid-template-columns: 32px 1fr;
    grid-template-rows: 27px 1fr;
    border-bottom: 1px solid #c0bebc;
    margin-bottom: 2px;
    min-width: 0;
}

.ruler-top {
    grid-column: 2;
    width: 67%;
    margin: 4px auto 0;
}

.ruler-side {
    grid-column: 1;
    grid-row: 2;
    width: 17px;
    margin-left: 7px;
    display: flex;
    align-items: center;
}

.ruler {
    width: 100%;
    background: #fff;
    font-size: 14px;
    fill: #444;
}

.ruler .dots {
    stroke: #999;
}

.stage {
    display: flex;
    align-items: center;
    justify-content: center;
}

.slide {
    position: relative;
    width: 67%;
    aspect-ratio: 16 / 9;
    border: 1px solid #c0bebc;
}

.slide-bg {
    width: 100%;
    height: 100%;
    stroke: none;
    overflow: hidden;
}

/* selected shape and its handles, placed freely on the slide */
.selection {
    position: absolute;
    left: 3.6%;
    right: 3.5%;
    top: 5%;
    bottom: 5%;
    border: 1px solid #979797;
}

.rounded-shape {
    height: 100%;
    background: #4472c7;
    border-radius: 28px;
}

.handle {
    position: absolute;
    width: 14px;
    height: 14px;
    margin: -7px;
    border: 3px solid #979797;
    border-radius: 50%;
    background: #fff;
}

.nw { left: 0; top: 0; }
.n { left: 50%; top: 0; }
.ne { left: 100%; top: 0; }
.w { left: 0; top: 50%; }
.e { left: 100%; top: 50%; }
.sw { left: 0; top: 100%; }
.s { left: 50%; top: 100%; }
.se { left: 100%; top: 100%; }
.adjust { left: 28px; top: 0; background: #f4a31c; }

.stem {
    position: absolute;
    left: 50%;
    top: -30px;
    height: 30px;
    border-left: 1px solid #979797;
}

.rotate {
    position: absolute;
    left: 50%;
    top: -58px;
    margin-left: -14px;
}

/* scroll bars */
.vscroll {
    width: 20px;
    display: flex;
    flex-direction: column;
    padding: 2px 1px 30px 0;
}

.sc-btn {
    height: 19px;
    background: #fff;
    border: 1px solid #b9b9b9;
    display: flex;
    align-items: center;
    justify-content: center;
}

.sc-btn::after {
    content: "";
    border: 5px solid transparent;
}

.sc-btn.up::after {
    border-bottom-color: #777;
    border-top: 0;
}

.sc-btn.down::after {
    border-top-color: #777;
    border-bottom: 0;
}

.sc-track {
    flex: 325;
    background: #dadada;
}

.sc-thumb {
    flex: 323;
    background: #fff;
    border: 1px solid #b9b9b9;
}

.page-btn {
    height: 20px;
    display: flex;
    align-items: flex-end;
    justify-content: center;
}

.page-btn svg {
    fill: #777;
    stroke: none;
}

/* status bar */
.statusbar {
    height: 27px;
    background: #f3f2f1;
    display: flex;
    align-items: center;
    padding: 0 5px 0 10px;
    white-space: nowrap;
}

.st-text {
    display: flex;
    align-items: center;
    gap: 3px;
}

.st-book {
    margin: 0 21px 0 24px;
}

.access {
    margin-left: 19px;
}

.view-btn {
    width: 50px;
    height: 27px;
    display: flex;
    align-items: center;
    justify-content: center;
}

.view-btn.on {
    background: #d2d0ce;
}

.note {
    margin-right: 41px;
}

.zoom-btn {
    margin: 0 6px;
}

.zoom-range {
    appearance: none;
    width: 125px;
    height: 20px;
    background: linear-gradient(#aaa, #aaa) center / 100% 1px no-repeat, linear-gradient(#aaa, #aaa) center / 1px 8px no-repeat;
}

.zoom-range::-webkit-slider-thumb {
    appearance: none;
    width: 6px;
    height: 14px;
    background: #777;
}

.zoom-pct {
    width: 46px;
    text-align: center;
    margin: 0 2px 0 5px;
}

/* windows taskbar */
.taskbar {
    height: 50px;
    background: linear-gradient(90deg, #292126, #2b2227 50%, #36262e);
    color: #fff;
    display: flex;
    align-items: center;
}

.taskbar svg {
    stroke: none;
}

.task {
    width: 62px;
    height: 50px;
    display: flex;
    align-items: center;
    justify-content: center;
    position: relative;
}

.task.start {
    width: 60px;
}

.task.focus {
    background: #5c5257;
}

.task.open::after {
    content: "";
    position: absolute;
    left: 6px;
    right: 6px;
    bottom: 0;
    height: 3px;
    background: #76b9ed;
}

.task.focus::after {
    left: 0;
    right: 0;
}

.logo-t { fill: #fff; font-size: 12px; font-weight: 700; text-anchor: middle; }
.b-t { fill: #fff; font-size: 17px; text-anchor: middle; }
.ps-t { fill: #31a8ff; font-size: 15px; font-weight: 700; text-anchor: middle; }
.player { fill: #333; font-size: 8px; font-weight: 700; text-anchor: middle; }

.tray {
    display: flex;
    align-items: center;
    gap: 11px;
}

.taskbar .tray svg,
.notice svg {
    stroke: #fff;
    stroke-width: 1.3;
}

.taskbar .notice svg {
    stroke: #fff;
}

.ime {
    font-size: 18px;
    line-height: 20px;
}

.ime-box {
    width: 19px;
    height: 20px;
    background: #fff;
    color: #111;
    font-size: 16px;
    line-height: 20px;
    text-align: center;
    margin-left: 7px;
}

.clock {
    display: flex;
    flex-direction: column;
    align-items: center;
    line-height: 22px;
    width: 86px;
    margin: 0 18px 0 17px;
}

.notice {
    margin-right: 24px;
}

.desk {
    width: 6px;
    height: 50px;
    border-left: 1px solid #84777d;
}

/* shape gallery drop-down */
.gallery {
    position: absolute;
    left: 1159px;
    top: 87px;
    bottom: 55px;
    z-index: 5;
    display: flex;
    background: #fff;
    border: 1px solid #c0bebc;
    box-shadow: 1px 1px 3px rgba(0, 0, 0, 0.2);
    padding: 0 2px 0 1px;
}

.gallery-list {
    overflow: hidden;
}

.gallery-scroll {
    width: 19px;
    padding-top: 4px;
    margin-left: 1px;
    display: flex;
    flex-direction: column;
}

.g-thumb {
    flex: 838;
    background: #fff;
    border: 1px solid #b9b9b9;
}

.g-rest {
    flex: 41;
    background: #e6e6e6;
}

.grip {
    align-self: flex-end;
    margin: 3px 1px 3px 0;
    stroke: none;
}

.shape-group {
    border-bottom: 1px solid #dcdcdc;
    padding-bottom: 11px;
}

.shape-group:first-child {
    padding-top: 1px;
}

.shape-group h3 {
    height: 37px;
    line-height: 36px;
    padding-left: 17px;
    font-size: 15px;
    color: #222;
}

.shape-group:last-child {
    border-bottom: none;
}

.shape-grid {
    display: grid;
    grid-template-columns: repeat(12, 24px);
}

.shape {
    width: 24px;
    height: 24px;
    padding: 2px;
}

.shape.hot {
    background: #dcdcdc;
}

.shape svg {
    width: 20px;
    height: 20px;
    fill: #fafafa;
    stroke: #444;
    stroke-width: 1.2;
}

.shape text {
    fill: #666;
    font-size: 10px;
    text-anchor: middle;
}

.shape .open {
    fill: none;
}

.shape .tb {
    fill: #2b8fd0;
    stroke: none;
}

.shape text.tb {
    font-size: 11px;
    font-weight: 700;
}

.red-mark {
    position: absolute;
    left: 143px;
    top: 64px;
    width: 34px;
    height: 4px;
    border-radius: 2px;
    background: #fa1e14;
}
```

FILE: script.js
```javascript
// regular star outline: n points, outer/inner radius
function star(n, r1, r2) {
    let d = '';
    for (let i = 0; i < n * 2; i++) {
        const r = i % 2 ? r2 : r1;
        const a = Math.PI * i / n - Math.PI / 2;
        d += (i ? 'L' : 'M') + (10 + r * Math.cos(a)).toFixed(1) + ' ' + (10 + r * Math.sin(a)).toFixed(1);
    }
    return d + 'z';
}

function circle(r) {
    return `M${10 - r} 10a${r} ${r} 0 1 0 ${2 * r} 0a${r} ${r} 0 1 0-${2 * r} 0z`;
}

function numbered(d, n) {
    return `<path d="${d}"/><text x="10" y="14">${n}</text>`;
}

const octagon = 'M6.500.500h7l6 6v7l-6 6h-7l-6-6v-7z';
const box = '<path d="M2.500 2.500h15v15h-15z"/><path class="tb" d="M0 0h4v4H0zM16 0h4v4h-4zM0 16h4v4H0zM16 16h4v4h-4z"/>';
const rectP = 'M.500 2.500h19v15H.500z';
const roundP = 'M4.500 2.500h11a4 4 0 0 1 4 4v7a4 4 0 0 1-4 4h-11a4 4 0 0 1-4-4v-7a4 4 0 0 1 4-4z';

// a leading "-" marks an open line, a leading "<" is raw svg
const shapes = {
    text: box + '<text class="tb" x="10" y="14">A</text>',
    textV: box + '<text class="tb" x="10" y="14" transform="rotate(90 10 10)">A</text>',
    line: '-M.500.500 19.500 19.500',
    arrow: '-M.500.500 19 19M19.500 14v5.500H14',
    arrow2: '-M1 1 19 19M19.500 14v5.500H14M.500 6V.500H6',
    rect: rectP,
    oval: 'M.500 10a9.500 7 0 1 0 19 0a9.500 7 0 1 0-19 0z',
    round: roundP,
    tri: 'M10 1 19 19H1z',
    elbow: '-M.500 1.500h9v16h10',
    elbowA: '-M.500 1.500h9v15H19M16 13.500l3 3-3 3',
    elbowD: '-M1 3.500h9.500v13H19M16 13.500l3 3-3 3M4 .500l-3 3 3 3',
    curve: '-M4.500 3.500h5c5 0 5 4 1 6s-6 7-1 7h7',
    curveA: '-M4.500 3.500h5c5 0 5 4 1 6s-6 6-1 7h5M11 13.500l4 3-3 3',
    curveD: '-M6 3.500h4c5 0 5 4 1 6s-6 6-1 7h5M12 13.500l3 3-3 3M9 .500l-3 3 3 3',
    right: 'M.500 6.500h11v-4L19 10l-7.500 7.500v-4H.500z',
    free: 'M5 2.500h11q-4 3-4 5t3 2q4.500 0 4.500 3v4q0 2-3 2H3.500q-3 0-3-3V9z',
    scribble: '-M1 .500C-1 9 1 12 6 10.500S16 5 14.500 2 7 3 6 8s3 5 6 3 7-3 7 0-8 4-8 6 8-3 8-1-1 3-3 4',
    arc: '-M.500 1.500C13 1 19.500 8 19.500 19',
    wave: '-M.500 9C4 0 9-1 11 7s4 10 8.500 10',
    lbrace: '-M13 .500C9.500.500 10 3 10 6s-1 4-3 4c2 0 3 1 3 4s-.500 5.500 3 5.500',
    rbrace: '-M7 .500c3.500 0 3 2.500 3 5.500s1 4 3 4c-2 0-3 1-3 4s.500 5.500-3 5.500',
    snip1: 'M.500 2.500h13l6 6v9H.500z',
    snip2: 'M6 2.500h8l5.500 6v9H.500v-9z',
    snipD: 'M.500 2.500h13l6 6v9H6l-5.500-6z',
    snipR: 'M4 2.500h9.500l6 6v9H.500V6q0-3.500 3.500-3.500z',
    round1: 'M.500 2.500h15q4 0 4 4v11H.500z',
    round2: 'M4.500 2.500h11q4 0 4 4v11H.500v-11q0-4 4-4z',
    roundD: 'M.500 2.500h15q4 0 4 4v11h-15q-4 0-4-4z',
    rtri: 'M1.500 1 18.500 18.500h-17z',
    para: 'M6 1.500h13.500l-5.500 17H.500z',
    trap: 'M6.500 3.500h7l4 13h-15z',
    diamond: 'M10 .500 19.500 10 10 19.500.500 10z',
    penta: 'M10 .500 19.500 7.500 16 19H4L.500 7.500z',
    hexa: 'M5.500 1.500h9l5 8.500-5 8.500h-9L.500 10z',
    o7: numbered(octagon, 7),
    o8: numbered(octagon, 8),
    o10: numbered(octagon, 10),
    o12: numbered(octagon, 12),
    pie: 'M10 .500A9.500 9.500 0 1 0 19.500 9H10z',
    chord: 'M13 1A9.500 9.500 0 1 0 19 11z',
    tear: 'M10 .500h9.500V10A9.500 9.500 0 1 1 10 .500z',
    frame: '<path d="M.500.500h19v19H.500z"/><path d="M5.500 5.500h9v9h-9z"/><path d="M3 3h14v14H3z" fill="none" stroke="#ccc"/>',
    half: 'M.500.500h19l-4 4h-10v10l-5 5z',
    ell: 'M.500.500h6v12h13v7H.500z',
    stripe: 'M10 .500h9.500L.500 19.500V10z',
    plus: 'M6.500.500h7v6h6v7h-6v6h-7v-6h-6v-7h6z',
    plaque: 'M5 .500h10q0 4.500 4.500 4.500v10q-4.500 0-4.500 4.500H5q0-4.500-4.500-4.500V5Q5 5 5 .500z',
    can: 'M3 3v14c0 3 14 3 14 0V3c0-3-14-3-14 0zc0 3 14 3 14 0',
    cube: 'M.500 6.500 6 .500h13.500v13l-6 6H.500zM.500 6.500h13v13M13.500 6.500l6-6',
    bevel: 'M.500.500h19v19H.500zM4.500 4.500h11v11h-11zM.500.500l4 4M19.500.500l-4 4M.500 19.500l4-4M19.500 19.500l-4-4',
    donut: circle(9.5) + circle(4.5),
    no: `<path d="${circle(9.5)}"/><path d="M5.500 7.500l7 7c-4 3-10-1-7-7zM7.500 5.500l7 7c3-4-1-10-7-7z"/>`,
    block: 'M.500 14.500c0-13 19-13 19 0h-5c0-6-9-6-9 0z',
    fold: 'M.500.500h19v13l-6 6H.500zM13.500 19.500v-6h6',
    smile: `<path d="${circle(9.5)}"/><circle cx="6.500" cy="7" r="1.200"/><circle cx="13.500" cy="7" r="1.200"/><path class="open" d="M4.500 12c2 5 9 5 11 0"/>`,
    heart: 'M10 5C8-1 .500 1 .500 7c0 5 6 9 9.500 12.500C13.500 16 19.500 12 19.500 7 19.500 1 12 -1 10 5z',
    bolt: 'M5 .500h5l4 6h-2l4 5h-2l3 8-9-7h3l-5-5h3z',
    sun: `<path d="${circle(5.5)}"/><path class="open" d="M8.500 2 10 .500 11.500 2M8.500 18l1.500 1.500 1.500-1.500M2 8.500.500 10 2 11.500M18 8.500l1.500 1.500-1.500 1.500M3 5.500V3h2.500M17 5.500V3h-2.500M3 14.500V17h2.500M17 14.500V17h-2.500"/>`,
    moon: 'M15 .500C2 0 2 20 15 19.500 8 15 8 5 15 .500z',
    cloud: 'M4 4c1-4 6-3 7-1 3-3 7-1 7 2 3 2 2 6 0 6 1 5-4 7-6 5-2 4-6 3-6 0-4 1-6-2-4-4-3-2-2-7 2-8z',
    brackets: '-M7 .500H4.500q-4 0-4 4v11q0 4 4 4H7M13 .500h2.500q4 0 4 4v11q0 4-4 4H13',
    braces: '-M7 .500C2 .500 6 9 1 10c5 1 1 9.500 6 9.500M13 .500c5 0 1 8.500 6 9.500-5 1-1 9.500-6 9.500',
    lbrk: '-M13 .500h-3q-3 0-3 4v11q0 4 3 4h3',
    rbrk: '-M7 .500h3q3 0 3 4v11q0 4-3 4H7',
    lr: 'M.500 10l5-5v3h9V5l5 5-5 5v-3h-9v3z',
    quad: 'M10 .500l3.500 4H12V8h3.500V6.500l4 3.500-4 3.500V12H12v3.500h1.500l-3.500 4-3.500-4H8V12H4.500v1.500L.500 10l4-3.500V8H8V4.500H6.500z',
    tee: 'M10 1.500l4 4h-2v6h4V9.500l3.500 4-3.500 4v-2H4v2l-3.500-4 3.500-4v2h4v-6H6z',
    bend: 'M.500 18.500V7q0-4 4-4h9V.500L19.500 5l-6 4.500V7H5v11.500z',
    uturn: 'M1 18.500V9C1-2 17-2 17 9v3h2.500L15 18l-4.500-6H13V9c0-5-8-5-8 0v9.500z',
    leftup: 'M15 .500l4.500 5h-2V16H6v2.500l-5.500-4L6 10v2.500h7v-7h-2.500z',
    bentup: 'M15 .500l4.500 5h-2v13H.500v-4.500h13v-8.500h-3z',
    curveR: 'M14 1.500C-4 0-4 14 10 15.500v3l7-4.500-7-4.500v3C0 12 1 6 14 5z',
    stripeA: 'M.500 6.500h1.500v7H.500zM4 6.500h1.500v7H4zM7 6.500h5v-4l7.500 7.500-7.500 7.500v-4H7z',
    notch: 'M.500 6.500h9v-3l9.500 6.500-9.500 6.500v-3h-9l3-3.500z',
    pentA: 'M.500 2.500h12l7 7.500-7 7.500H.500z',
    chevron: 'M.500 2.500h11l7.500 7.500-7.500 7.500H.500L8 10z',
    callR: 'M.500.500h11v8h4V6l4 4-4 4v-2.500h-4v8H.500z',
    callLR: 'M6 .500h8v7h2V6l3.500 4-3.500 4v-1.500h-2v7H6v-7H4V14L.500 10 4 6v1.500h2z',
    quadC: 'M10 .500l3.500 4H12V7h1.500v1.500h2V6.500l4 3.500-4 3.500v-2h-2V13H12v2.500h1.500l-3.500 4-3.500-4H8V13H6.500v-1.500h-2v2L.500 10l4-3.500v2h2V7H8V4.500H6.500z',
    minus: 'M.500 7.500h19v5H.500z',
    times: 'M5 .500l5 5.500 5-5.500 4.500 4L14 10l5.500 5.500-4.500 4-5-5.500-5 5.500-4.500-4L6 10 .500 4.500z',
    divide: '<path d="M.500 7.500h19v5H.500z"/><circle cx="10" cy="2.500" r="2"/><circle cx="10" cy="17" r="2"/>',
    equal: 'M.500 3.500h19v5H.500zM.500 11.500h19v5H.500z',
    noteq: 'M.500 3.500h19v5H.500zM.500 11.500h19v5H.500zM14 .500h5l-13 19H1z',
    fdia: 'M10 4l9 6-9 6-9-6z',
    predef: 'M.500.500h19v19H.500zM5 .500v19M15 .500v19',
    storage: 'M.500.500h19v19H.500zM5 .500v19M.500 5h19',
    doc: 'M.500.500h19v15c-7-1-8 4-13 4q-4 0-6-2z',
    multidoc: 'M5 4V.500h14.500v11H17M2.500 6V3H17v11h-2M.500 6h14v10c-5 0-6 3-10 3q-3 0-4-1z',
    term: 'M6 4.500h8c7 0 7 11 0 11H6c-7 0-7-11 0-11z',
    prep: 'M5 4.500h10l4.500 5.500-4.500 5.500H5L.500 10z',
    manIn: 'M.500 8l19-4.500v13H.500z',
    manOp: 'M.500 2.500h19l-5 15h-9z',
    circ: circle(9),
    offpage: 'M3 1.500h14V14l-7 5-7-5z',
    card: 'M7 .500h12.500v19H.500V7z',
    tape: 'M.500 3c4 3 7 3 10 0 4-2 6-2 9-1v15c-4-2-7-1-10 1-4 2-6 2-9 0z',
    sumj: circle(9) + 'M4 4l12 12M16 4 4 16',
    orj: circle(9) + 'M1 10h18M10 1v18',
    collate: 'M3.500.500h13l-13 19h13z',
    sort: 'M10 1l7 9-7 9-7-9zM3 10h14',
    extract: 'M10 3.500l7 14H3z',
    merge: 'M1 1.500h18L10 19z',
    stored: 'M5 2.500h14c-5 4-5 11 0 15H5c-6-1-6-14 0-15z',
    delay: 'M.500.500H10a9.500 9.500 0 0 1 0 19H.500z',
    seq: 'M19.500 19.500H10A9.500 9.500 0 1 1 18 15v2h1.500z',
    disk: 'M.500 5v9c0 5 19 5 19 0V5c0-4-19-4-19 0zc0 4 19 4 19 0',
    direct: 'M6 .500h8c5 0 5 19 0 19H6c-5 0-5-19 0-19zM14 .500c-5 0-5 19 0 19',
    display: 'M6 .500h5c11 0 11 19 0 19H6L.500 10z',
    boom1: 'M10 5l3-4.500v5l5.500-2-3.500 5 4 1-4 2.500 3.500 4-5-1.500-1 4.500-2.500-4-3 4v-4.500l-5.500 1 4-4L.500 9.500 5 8 1.500 3l5.500 3.500L8.500 2z',
    boom2: 'M9 4l2-3.500 1.500 4 4-3v4l3-.500-2 3.500 2 1-2 2 2 3-4-.500v4l-3.500-2-1.500 3-2-3.500-3 3-.500-3.500-3.500.500 2-3-3-2 3.500-1.500-2.500-3 4 .500-.500-3.500z',
    s4: star(4, 9.8, 3.2),
    s5: star(5, 10, 4.2),
    s6: star(6, 9.8, 5.6),
    s7: star(7, 9.8, 6),
    s8: numbered(star(8, 9.8, 8), 8),
    s10: numbered(star(10, 9.8, 8), 10),
    s12: numbered(star(12, 9.8, 7.8), 12),
    s16: numbered(star(14, 9.8, 7.8), 16),
    s24: numbered(star(15, 9.8, 7.6), 24),
    s32: numbered(star(16, 9.8, 7.6), 32),
    rib1: 'M.500 6.500H5v-2h10v2h4.500l-2 5 2 4.500h-6v-2h-7v2h-6l2-4.500zM5 6.500v7.500M15 6.500v7.500',
    rib2: 'M.500 4.500h6v2h7v-2h6l-2 4 2 4.500H15v3H5v-3H.500l2-4.500zM5 8v5M15 8v5',
    rib3: 'M.500 7l4.500 0c1-5 9-5 10 0h4.500l-2 4 2 5-6-1c-2-3-5-3-7 0l-6 1 2-5zM5 7v8M15 7v8',
    rib4: 'M.500 4l5 2c3 2 6 2 9 0l5-2-2 5 2 5-4.500-.500c-1 5-9 5-10 0L.500 14l2-5zM5 6v7M15 6v7',
    scrollV: 'M4 16V3q0-2.500 2.500-2.500H17q2.500 0 2.500 2.500T17 5.500h-1V17q0 2.500-2.500 2.500H3q-2.500 0-2.500-2T3 16zM16 5.500H7.500V3',
    scrollH: 'M4 5.500h12V3q0-2.500 2-2.500T19.500 3v11q0 2-2 2H5.500v1.500q0 2-2.500 2t-2.500-2V7.500Q.500 5.500 3 5.500zM5.500 16V8H3.500',
    flag: 'M.500 3c4-4 6-2 9 0s6 2 10-1v15c-4 3-6 3-10 1s-5-3-9-1z',
    flag2: 'M.500 1.500c3 2 4 2 6 .500s3-1 4 0 4 2 9-1v17c-3 2-5 2-7 0s-3-1-5 .500-4 1-7-1z',
    crect: 'M.500 1.500h19v13H12l-3.500 4-3-4h-5z',
    cround: 'M4.500 1.500h11q4 0 4 4v5q0 4-4 4H12l-3.500 4-3-4h-1q-4 0-4-4v-5q0-4 4-4z',
    coval: 'M5 19l1-4C-3 11 0 1.500 10 1.500c12 0 12 14 0 14q-1 0-2-.200z',
    ccloud: '<path d="M4 3c1-3 6-3 7-1 3-3 7-1 7 2 3 2 2 6 0 6 0 4-4 5-6 3-2 2-5 2-6 0-4 0-5-2-4-4-2-2-1-5 2-6z"/><circle cx="5" cy="16" r="1.500"/><circle cx="3" cy="19" r=".800"/>',
    l1: 'M6.500 3.500h13v11h-13zM6.500 5 .500 16',
    l2: 'M6.500 3.500h13v11h-13zM6.500 7.500H3.500l-3 10',
    l3: 'M6.500 3.500h13v11h-13zM6.500 8.500h-6V15l4 4',
    d1: '<path class="open" d="M6.500 5 .500 16"/><path stroke-dasharray="3 1.500" d="M6.500 3.500h13v11h-13z"/>',
    d2: '<path class="open" d="M6.500 7.500H3.500l-3 10"/><path stroke-dasharray="3 1.500" d="M6.500 3.500h13v11h-13z"/>',
    d3: '<path class="open" d="M6.500 8.500h-6V15l4 4"/><path stroke-dasharray="3 1.500" d="M6.500 3.500h13v11h-13z"/>',
    a1: 'M8.500 3.500h11v12h-11zM6.500 2v15M6.500 7l-6 9',
    a2: 'M8.500 3.500h11v12h-11zM6.500 2v15M6.500 8h-3l-3 10',
    a3: 'M8.500 3.500h11v12h-11zM6.500 2v15M6.500 9h-6v6l4 4'
};

const groups = [
    ['最近使用的形状', 'text textV line arrow rect oval round* tri elbow elbowA right right@90 free scribble arc wave lbrace rbrace'],
    ['线条', 'line arrow arrow2 elbow elbowA elbowD curve curveA curveD wave free scribble'],
    ['矩形', 'rect round snip1 snip2 snipD snipR round1 round2 roundD'],
    ['基本形状', 'text textV oval tri rtri para trap diamond penta hexa o7 o8 o10 o12 pie chord tear frame half ell stripe plus plaque can cube bevel donut no block fold smile heart bolt sun moon cloud arc brackets braces lbrk rbrk lbrace rbrace'],
    ['箭头总汇', 'right right@180 right@-90 right@90 lr lr@90 quad tee bend uturn leftup bentup curveR curveR@x curveR@-90 curveR@y stripeA notch pentA chevron callR callR@90 callR@180 callR@-90 callLR quadC uturn'],
    ['公式形状', 'plus minus times divide equal noteq'],
    ['流程图', 'rect round fdia para predef storage doc multidoc term prep manIn manOp circ offpage card tape sumj orj collate sort extract merge stored delay seq disk direct display'],
    ['星与旗帜', 'boom1 boom2 s4 s5 s6 s7 s8 s10 s12 s16 s24 s32 rib1 rib2 rib3 rib4 scrollV scrollH flag flag2'],
    ['标注', 'crect cround coval ccloud l1 l2 l3 d1 d2 d3 d1 d2 d3 a1 a2 a3'],
    ['动作按钮', '']
];

const turns = {
    x: 'translate(20 0) scale(-1 1)',
    y: 'matrix(0 1 1 0 0 0)'
};

function shapeButton(item) {
    const hot = item.endsWith('*');
    const [name, turn] = item.replace('*', '').split('@');
    let body = shapes[name];
    if (body[0] === '-') {
        body = `<path class="open" d="${body.slice(1)}"/>`;
    } else if (body[0] !== '<') {
        body = `<path d="${body}"/>`;
    }
    if (turn) {
        body = `<g transform="${turns[turn] || `rotate(${turn} 10 10)`}">${body}</g>`;
    }
    return `<button class="shape${hot ? ' hot' : ''}" aria-label="${name}"><svg viewBox="0 0 20 20">${body}</svg></button>`;
}

document.getElementById('galleryList').innerHTML = groups.map(([title, items]) => `
    <section class="shape-group">
        <h3>${title}</h3>
        <div class="shape-grid">${items.split(' ').filter(Boolean).map(shapeButton).join('')}</div>
    </section>`).join('');

// rulers: one number per centimetre, tick at the half, dots at the quarters
function ruler(length, max, vertical) {
    const step = 31;
    const mid = length / 2;
    let text = '', ticks = '', dots = '';
    for (let n = -max; n <= max; n++) {
        const p = mid + n * step;
        text += vertical
            ? `<text x="0" y="5" text-anchor="middle" transform="translate(8 ${p}) rotate(-90)">${Math.abs(n)}</text>`
            : `<text x="${p}" y="13" text-anchor="middle">${Math.abs(n)}</text>`;
    }
    for (let n = -max - 1; n <= max; n++) {
        const p = Math.round(mid + (n + 0.5) * step) + 0.5;
        ticks += vertical ? `M5 ${p}h6` : `M${p} 6v6`;
        dots += vertical ? `M7 ${p - 7}h2M7 ${p + 7}h2` : `M${p - 7} 8v2M${p + 7} 8v2`;
    }
    const size = vertical ? `0 0 17 ${length}` : `0 0 ${length} 17`;
    return `<svg class="ruler" viewBox="${size}"><path class="dots" d="${dots}"/><path d="${ticks}"/>${text}</svg>`;
}

document.getElementById('rulerTop').innerHTML = ruler(1052, 16, false);
document.getElementById('rulerSide').innerHTML = ruler(592, 9, true);
```
